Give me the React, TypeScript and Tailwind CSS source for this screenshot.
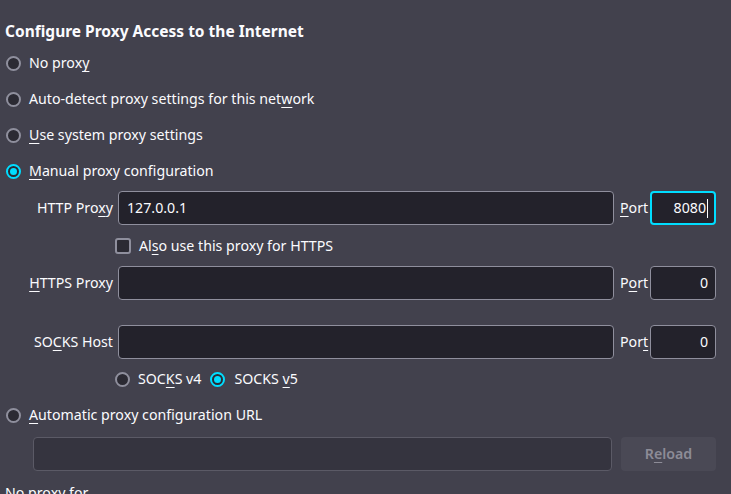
import React from "react";

const U = ({ children }: { children: React.ReactNode }) => (
  <span className="underline underline-offset-[3px] decoration-1">{children}</span>
);

const Radio = ({ checked }: { checked?: boolean }) =>
  checked ? (
    <span className="w-[15px] h-[15px] rounded-full border-2 border-[#00ddff] bg-[#2b2a33] flex items-center justify-center shrink-0">
      <span className="w-[7px] h-[7px] rounded-full bg-[#00ddff]" />
    </span>
  ) : (
    <span className="w-[15px] h-[15px] rounded-full border-2 border-[#8f8f9d] bg-[#2b2a33] shrink-0" />
  );

const RadioRow = ({ checked, children }: { checked?: boolean; children: React.ReactNode }) => (
  <div className="flex items-center h-[36px] pl-[1px]">
    <Radio checked={checked} />
    <span className="ml-[8px]">{children}</span>
  </div>
);

const Field = ({
  label,
  value,
  port,
  portLabel,
  focused,
}: {
  label: React.ReactNode;
  value?: string;
  port: string;
  portLabel: React.ReactNode;
  focused?: boolean;
}) => (
  <div className="flex items-center h-[34px]">
    <div className="w-[108px] text-right shrink-0">{label}</div>
    <div className="ml-[5px] flex-1 h-[34px] rounded-[4px] border border-[#8f8f9d] bg-[#23222b] flex items-center px-[8px]">
      {value}
    </div>
    <div className="ml-[6px] w-[30px] shrink-0">{portLabel}</div>
    <div
      className={
        focused
          ? "w-[66px] h-[34px] rounded-[4px] border-2 border-[#00ddff] bg-[#23222b] flex items-center justify-end pr-[6px] shrink-0"
          : "w-[66px] h-[34px] rounded-[4px] border border-[#8f8f9d] bg-[#23222b] flex items-center justify-end pr-[7px] shrink-0"
      }
    >
      {port}
      {focused && <span className="w-px h-[19px] bg-white ml-[1px]" />}
    </div>
  </div>
);

export default function App() {
  return (
    <div
      className="w-[731px] h-[494px] overflow-hidden bg-[#42414d] text-[#fbfbfe] text-[14.2px] leading-[20px] pl-[5px] pr-[15px]"
      style={{ fontFamily: '"Noto Sans", "Open Sans", sans-serif' }}
    >
      <div className="pt-[20px] text-[15.5px] font-bold leading-[22px]">Configure Proxy Access to the Internet</div>
      <div className="mt-[3px]">
        <RadioRow>
          No prox<U>y</U>
        </RadioRow>
        <RadioRow>
          Auto-detect proxy settings for this net<U>w</U>ork
        </RadioRow>
        <RadioRow>
          <U>U</U>se system proxy settings
        </RadioRow>
        <RadioRow checked>
          <U>M</U>anual proxy configuration
        </RadioRow>
      </div>
      <div className="mt-[2px]">
        <Field
          label={
            <>
              HTTP Pro<U>x</U>y
            </>
          }
          value="127.0.0.1"
          port="8080"
          portLabel={
            <>
              <U>P</U>ort
            </>
          }
          focused
        />
        <div className="flex items-center h-[41px] pl-[110px]">
          <span className="w-[16px] h-[16px] rounded-[3px] border-2 border-[#8f8f9d] bg-[#2b2a33] shrink-0" />
          <span className="ml-[8px]">
            Al<U>s</U>o use this proxy for HTTPS
          </span>
        </div>
        <Field
          label={
            <>
              <U>H</U>TTPS Proxy
            </>
          }
          port="0"
          portLabel={
            <>
              P<U>o</U>rt
            </>
          }
        />
        <div className="h-[25px]" />
        <Field
          label={
            <>
              SO<U>C</U>KS Host
            </>
          }
          port="0"
          portLabel={
            <>
              Por<U>t</U>
            </>
          }
        />
        <div className="flex items-center h-[38px] pt-[2px] pl-[110px]">
          <Radio />
          <span className="ml-[8px]">
            SOC<U>K</U>S v4
          </span>
          <span className="ml-[9px]">
            <Radio checked />
          </span>
          <span className="ml-[9px]">
            SOCKS <U>v</U>5
          </span>
        </div>
      </div>
      <RadioRow>
        <U>A</U>utomatic proxy configuration URL
      </RadioRow>
      <div className="flex items-center h-[34px] mt-[4px] pl-[28px]">
        <div className="flex-1 h-[34px] rounded-[4px] border border-[#5b5a66] bg-[#35343f]" />
        <div className="ml-[9px] w-[95px] h-[34px] rounded-[4px] bg-[#4a4955] text-[#8d8c97] font-semibold flex items-center justify-center">
          R<U>e</U>load
        </div>
      </div>
      <div className="mt-[12px]">No proxy for</div>
    </div>
  );
}
